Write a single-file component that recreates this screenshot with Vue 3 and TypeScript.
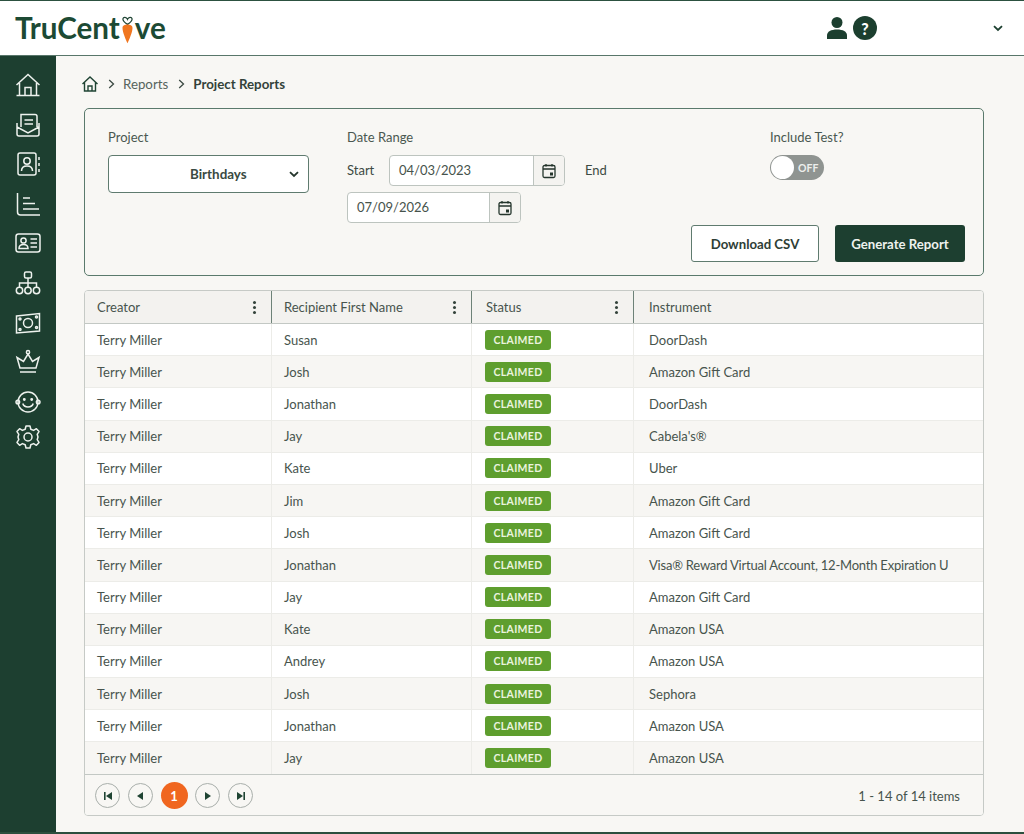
<script setup lang="ts">
interface ReportRow {
  first: string
  instrument: string
}

const rows: ReportRow[] = [
  { first: 'Susan', instrument: 'DoorDash' },
  { first: 'Josh', instrument: 'Amazon Gift Card' },
  { first: 'Jonathan', instrument: 'DoorDash' },
  { first: 'Jay', instrument: "Cabela's®" },
  { first: 'Kate', instrument: 'Uber' },
  { first: 'Jim', instrument: 'Amazon Gift Card' },
  { first: 'Josh', instrument: 'Amazon Gift Card' },
  { first: 'Jonathan', instrument: 'Visa® Reward Virtual Account, 12-Month Expiration U' },
  { first: 'Jay', instrument: 'Amazon Gift Card' },
  { first: 'Kate', instrument: 'Amazon USA' },
  { first: 'Andrey', instrument: 'Amazon USA' },
  { first: 'Josh', instrument: 'Sephora' },
  { first: 'Jonathan', instrument: 'Amazon USA' },
  { first: 'Jay', instrument: 'Amazon USA' },
]
</script>

<template>
  <div class="page">
    <header class="topbar">
      <div class="logo">
        <span>TruCent</span>
        <span class="carrot">
          <svg width="18" height="34" viewBox="0 0 18 34">
            <path d="M9 10.5 C6 8 3.2 6.5 3.5 3.6 C4 1 7.8 1 9 4.2 C10.2 1 14 1 14.5 3.6 C14.8 6.5 12 8 9 10.5 Z" fill="none" stroke="#1f4433" stroke-width="1.5" />
            <path d="M3 14.5 C3 11.5 6 10.5 9 10.5 C12 10.5 15 11.5 15 14.5 C15 20 11 28 9 33 C7 28 3 20 3 14.5 Z" fill="#f0761f" />
          </svg>
        </span>
        <span>ve</span>
      </div>
      <div class="top-icons">
        <svg width="22" height="24" viewBox="0 0 22 24" fill="#1c3f2f">
          <circle cx="11" cy="6.5" r="5.5" />
          <path d="M1 23 V19.5 C1 15.5 5 13.5 11 13.5 C17 13.5 21 15.5 21 19.5 V23 Z" />
        </svg>
        <span class="help">?</span>
      </div>
      <svg class="top-chevron" width="10" height="7" viewBox="0 0 10 7" fill="none" stroke="#1c3f2f" stroke-width="1.8">
        <path d="M1 1.2 L5 5 L9 1.2" />
      </svg>
    </header>

    <div class="body">
      <nav class="sidebar">
        <svg viewBox="0 0 26 26"><path d="M1.5 13 L13 2.5 L24.5 13 M4.5 11 V23.5 H21.5 V11 M10 23.5 V15.5 H16 V23.5 M1.5 23.5 H4.5 M21.5 23.5 H24.5" /></svg>
        <svg viewBox="0 0 26 26"><path d="M6 15 V2.5 H20 Q22 2.5 22 4.5 V15 M2 11 V22 Q2 24 4 24 H22 Q24 24 24 22 V11 M2 15 L13 21 L24 15 M9.5 8 H18 M9.5 12 H18" /></svg>
        <svg viewBox="0 0 26 26"><rect x="3" y="2" width="18" height="22" rx="2" /><circle cx="12" cy="10" r="3.2" /><path d="M6.5 20 C6.5 16 9 15 12 15 C15 15 17.5 16 17.5 20 M24 6 V9 M24 12 V15 M24 18 V21" /></svg>
        <svg viewBox="0 0 26 26"><path d="M2.5 2 V21 Q2.5 24 5.5 24 H25 M8 7 H15 M8 12.5 H20 M8 18 H24" /></svg>
        <svg viewBox="0 0 26 26"><rect x="1" y="4" width="24" height="18" rx="2.5" /><circle cx="8.5" cy="10.5" r="2.6" /><path d="M4 18.5 C4 15.5 6 14.5 8.5 14.5 C11 14.5 13 15.5 13 18.5 Z M15.5 9 H22 M15.5 13 H22 M15.5 17 H22" /></svg>
        <svg viewBox="0 0 26 26"><rect x="9.5" y="2" width="7" height="6" rx="1.5" /><circle cx="4.5" cy="20.5" r="3.2" /><circle cx="13" cy="20.5" r="3.2" /><circle cx="21.5" cy="20.5" r="3.2" /><path d="M13 8 V17.3 M4.5 17.3 V13 H21.5 V17.3" /></svg>
        <svg viewBox="0 0 26 26"><path d="M1.5 6 L24.5 3.5 V21 L1.5 23 Z" /><circle cx="13" cy="13" r="4.5" /><circle cx="5" cy="9" r="1" /><circle cx="21.5" cy="7" r="1" /><circle cx="5" cy="19.5" r="1" /><circle cx="21.5" cy="17.5" r="1" /></svg>
        <svg viewBox="0 0 26 26"><path d="M5 19 L2 8.5 L8.5 12.5 L13 5 L17.5 12.5 L24 8.5 L21 19 Z M5 23 H21" /><circle cx="13" cy="3.2" r="1.6" /></svg>
        <svg viewBox="0 0 26 26"><circle cx="13" cy="13" r="10" /><circle cx="2.8" cy="13" r="1.8" /><circle cx="23.2" cy="13" r="1.8" /><circle cx="9.3" cy="10.5" r=".7" /><circle cx="16.7" cy="10.5" r=".7" /><path d="M7.8 14.5 C9 19 17 19 18.2 14.5" /></svg>
        <svg class="gear" viewBox="0 0 26 26"><circle cx="13" cy="13" r="4" /><path d="M11 2 H15 L15.8 5.2 L18.6 6.4 L21.4 4.7 L24 7.6 L22.2 10.3 L23 13 L22.2 15.7 L24 18.4 L21.4 21.3 L18.6 19.6 L15.8 20.8 L15 24 H11 L10.2 20.8 L7.4 19.6 L4.6 21.3 L2 18.4 L3.8 15.7 L3 13 L3.8 10.3 L2 7.6 L4.6 4.7 L7.4 6.4 L10.2 5.2 Z" stroke-linejoin="round" /></svg>
      </nav>

      <main class="content">
        <div class="crumbs">
          <svg class="home" width="18" height="18" viewBox="0 0 18 18" fill="none" stroke="#1f4433" stroke-width="1.4">
            <path d="M1.5 9 L9 2 L16.5 9 M3.5 7.5 V16 H14.5 V7.5 M7 16 V11 H11 V16" />
          </svg>
          <svg class="sep" width="7" height="10" viewBox="0 0 7 10" fill="none" stroke="#3c4a43" stroke-width="1.3"><path d="M1.2 1 L5.5 5 L1.2 9" /></svg>
          <span class="crumb-link">Reports</span>
          <svg class="sep" width="7" height="10" viewBox="0 0 7 10" fill="none" stroke="#3c4a43" stroke-width="1.3"><path d="M1.2 1 L5.5 5 L1.2 9" /></svg>
          <b>Project Reports</b>
        </div>

        <section class="filters">
          <div class="f-project">
            <label>Project</label>
            <div class="select">
              <span>Birthdays</span>
              <svg width="10" height="7" viewBox="0 0 10 7" fill="none" stroke="#24352c" stroke-width="1.8"><path d="M1 1.2 L5 5 L9 1.2" /></svg>
            </div>
          </div>

          <div class="f-dates">
            <label>Date Range</label>
            <div class="date-line">
              <span class="inline-label">Start</span>
              <div class="date wide">
                <span class="date-value">04/03/2023</span>
                <span class="date-btn">
                  <svg width="16" height="16" viewBox="0 0 16 16" fill="none" stroke="#24352c" stroke-width="1.3"><rect x="2" y="2.5" width="12" height="12" rx="1.5" /><path d="M2 6 H14 M5 1 V3.5 M11 1 V3.5" /><rect x="9" y="9.5" width="3" height="3" fill="#24352c" stroke="none" /></svg>
                </span>
              </div>
              <span class="inline-label end">End</span>
            </div>
            <div class="date narrow">
              <span class="date-value">07/09/2026</span>
              <span class="date-btn">
                <svg width="16" height="16" viewBox="0 0 16 16" fill="none" stroke="#24352c" stroke-width="1.3"><rect x="2" y="2.5" width="12" height="12" rx="1.5" /><path d="M2 6 H14 M5 1 V3.5 M11 1 V3.5" /><rect x="9" y="9.5" width="3" height="3" fill="#24352c" stroke="none" /></svg>
              </span>
            </div>
          </div>

          <div class="f-right">
            <div class="f-test">
              <label>Include Test?</label>
              <div class="toggle"><span class="knob"></span><span class="off">OFF</span></div>
            </div>
            <div class="actions">
              <button type="button" class="btn">Download CSV</button>
              <button type="button" class="btn primary">Generate Report</button>
            </div>
          </div>
        </section>

        <section class="grid">
          <div class="row head">
            <div class="cell">Creator<span class="dots"></span></div>
            <div class="cell">Recipient First Name<span class="dots"></span></div>
            <div class="cell">Status<span class="dots"></span></div>
            <div class="cell">Instrument</div>
          </div>
          <div v-for="(r, i) in rows" :key="i" class="row" :class="{ alt: i % 2 === 1 }">
            <div class="cell">Terry Miller</div>
            <div class="cell">{{ r.first }}</div>
            <div class="cell"><span class="badge">CLAIMED</span></div>
            <div class="cell" :class="{ long: r.instrument.length > 40 }">{{ r.instrument }}</div>
          </div>
          <div class="pager">
            <div class="pages">
              <span class="pg"><svg width="10" height="10" viewBox="0 0 10 10" fill="#1f4433"><path d="M1 1 H2.6 V9 H1 Z M9 1 V9 L3 5 Z" /></svg></span>
              <span class="pg"><svg width="10" height="10" viewBox="0 0 10 10" fill="#1f4433"><path d="M8 1 V9 L2 5 Z" /></svg></span>
              <span class="pg current">1</span>
              <span class="pg"><svg width="10" height="10" viewBox="0 0 10 10" fill="#1f4433"><path d="M2 1 V9 L8 5 Z" /></svg></span>
              <span class="pg"><svg width="10" height="10" viewBox="0 0 10 10" fill="#1f4433"><path d="M1 1 V9 L7 5 Z M7.4 1 H9 V9 H7.4 Z" /></svg></span>
            </div>
            <span class="count">1 - 14 of 14 items</span>
          </div>
        </section>
      </main>
    </div>
  </div>
</template>

<style scoped>
.page {
  width: 1024px;
  height: 834px;
  box-sizing: border-box;
  display: flex;
  flex-direction: column;
  overflow: hidden;
  background: #f8f7f4;
  border-top: 1px solid #2c5140;
  border-bottom: 2px solid #2c4f3e;
  font-family: Lato, "Open Sans", sans-serif;
  color: #3c4a43;
  font-size: 13px;
}

.topbar {
  height: 55px;
  flex: none;
  box-sizing: border-box;
  display: flex;
  align-items: center;
  padding: 0 21px 0 15px;
  background: #fff;
  border-bottom: 1.5px solid #58766a;
}

.logo {
  display: flex;
  align-items: flex-end;
  height: 30px;
  font-size: 29.6px;
  line-height: 30px;
  font-weight: 700;
  color: #1c4a34;
}

.carrot {
  width: 15px;
  display: flex;
  justify-content: center;
  margin-top: -14px;
  height: 44px;
  align-items: flex-end;
  position: relative;
  top: 4px;
}

.top-icons {
  margin-left: auto;
  display: flex;
  align-items: center;
  gap: 5px;
  margin-right: 116px;
}

.help {
  width: 24px;
  height: 24px;
  border-radius: 50%;
  background: #1c3f2f;
  color: #fff;
  font-weight: 900;
  font-size: 16px;
  display: flex;
  align-items: center;
  justify-content: center;
}

.body {
  flex: 1;
  display: flex;
  min-height: 0;
}

.sidebar {
  width: 56px;
  flex: none;
  box-sizing: border-box;
  background: #1d3f30;
  display: flex;
  flex-direction: column;
  align-items: center;
  padding-top: 16px;
  gap: 13.6px;
}

.sidebar svg {
  width: 26px;
  height: 26px;
  flex: none;
  fill: none;
  stroke: #eef2ee;
  stroke-width: 1.5;
}

.sidebar .gear {
  margin-top: -4px;
}

.content {
  flex: 1;
  min-width: 0;
  box-sizing: border-box;
  padding: 0 40px 0 28px;
}

.crumbs {
  height: 52px;
  box-sizing: border-box;
  padding-top: 3px;
  display: flex;
  align-items: center;
  font-size: 13.3px;
  color: #56645d;
}

.crumbs .home {
  margin-right: 9px;
  margin-left: -3px;
}

.crumbs .sep {
  margin-right: 8px;
}

.crumb-link {
  margin-right: 10px;
}

.crumbs b {
  color: #33423a;
  font-weight: 700;
}

.filters {
  height: 168px;
  box-sizing: border-box;
  border: 1.5px solid #5a7a6c;
  border-radius: 5px;
  padding: 20px 18px 13px 23px;
  display: flex;
}

label {
  display: block;
  font-size: 13px;
  line-height: 16px;
  color: #4a5750;
}

.f-project {
  width: 239px;
  flex: none;
}

.select {
  margin-top: 10px;
  width: 201px;
  height: 38px;
  box-sizing: border-box;
  border: 1.5px solid #5f7b6f;
  border-radius: 4px;
  background: #fff;
  display: flex;
  align-items: center;
  justify-content: space-between;
  padding-left: 81px;
  padding-right: 9px;
  font-size: 13.4px;
  font-weight: 700;
  color: #3a4a42;
}

.f-dates {
  width: 300px;
  flex: none;
}

.date-line {
  display: flex;
  align-items: center;
  margin-top: 10px;
}

.inline-label {
  width: 42px;
  flex: none;
  padding-bottom: 2px;
}

.inline-label.end {
  margin-left: 20px;
}

.date {
  height: 31px;
  box-sizing: border-box;
  display: flex;
  border: 1px solid #bdc4bf;
  border-radius: 4px;
  background: #fff;
  overflow: hidden;
}

.date.wide {
  width: 176px;
  flex: none;
}

.date.narrow {
  width: 174px;
  margin-top: 6px;
}

.date-value {
  flex: 1;
  padding-left: 9px;
  line-height: 29px;
  color: #46534c;
}

.date-btn {
  width: 30px;
  background: #f4f3f0;
  border-left: 1px solid #bdc4bf;
  display: flex;
  align-items: center;
  justify-content: center;
}

.f-right {
  flex: 1;
  display: flex;
  flex-direction: column;
  justify-content: space-between;
}

.f-test {
  margin-left: 123px;
}

.toggle {
  margin-top: 10px;
  width: 54px;
  height: 25px;
  box-sizing: border-box;
  border-radius: 13px;
  background: #8f9491;
  display: flex;
  align-items: center;
  gap: 4px;
}

.knob {
  width: 23px;
  height: 23px;
  margin-left: 1px;
  border-radius: 50%;
  background: #fff;
}

.off {
  color: #eceeec;
  font-size: 10.5px;
  font-weight: 700;
}

.actions {
  display: flex;
  justify-content: flex-end;
  gap: 16px;
}

.btn {
  height: 37px;
  width: 128px;
  box-sizing: border-box;
  border: 1.5px solid #5f7b6f;
  border-radius: 3px;
  background: #fff;
  color: #2e3e36;
  font: 700 13.2px Lato, "Open Sans", sans-serif;
}

.btn.primary {
  width: 130px;
  border: 0;
  background: #1d3f30;
  color: #eef2ee;
}

.grid {
  margin-top: 14px;
  height: 526px;
  box-sizing: border-box;
  border: 1px solid #c6cac6;
  border-radius: 4px;
  overflow: hidden;
  background: #fff;
}

.row {
  display: grid;
  grid-template-columns: 187px 200px 162px 1fr;
  height: 32.2px;
  box-sizing: border-box;
  border-bottom: 1px solid #ecece8;
}

.row.alt {
  background: #f7f6f3;
}

.cell {
  display: flex;
  align-items: center;
  padding-left: 12px;
  border-right: 1px solid #ecece8;
  color: #47544d;
  white-space: nowrap;
  overflow: hidden;
}

.cell:nth-child(3) {
  padding-left: 14px;
}

.cell:last-child {
  border-right: 0;
  padding-left: 15px;
}

.cell.long {
  letter-spacing: -0.22px;
}

.row.head {
  height: 33px;
  background: #f3f2ef;
  border-bottom: 1px solid #c3c8c4;
}

.row.head .cell {
  border-right: 1px solid #6d8278;
  justify-content: space-between;
  padding-right: 15px;
}

.row.head .cell:last-child {
  border-right: 0;
  justify-content: flex-start;
}

.dots {
  width: 3px;
  height: 3px;
  border-radius: 50%;
  background: #33423a;
  box-shadow: 0 -5px 0 #33423a, 0 5px 0 #33423a;
}

.badge {
  width: 66px;
  height: 20px;
  margin-left: -1px;
  border-radius: 3px;
  background: #5e9e2e;
  color: #eaf3de;
  font-size: 10.5px;
  font-weight: 700;
  letter-spacing: 0.3px;
  display: flex;
  align-items: center;
  justify-content: center;
}

.pager {
  height: 42px;
  display: flex;
  align-items: center;
  justify-content: space-between;
  padding: 0 23px 0 10px;
  background: #f8f7f4;
  border-top: 1px solid #c3c8c4;
  margin-top: -1px;
}

.pages {
  display: flex;
  align-items: center;
  gap: 7.8px;
}

.pg {
  width: 25px;
  height: 25px;
  box-sizing: border-box;
  border: 1px solid #a9afab;
  border-radius: 50%;
  display: flex;
  align-items: center;
  justify-content: center;
}

.pg.current {
  width: 27px;
  height: 27px;
  border: 0;
  background: #f0661f;
  color: #fff;
  font-weight: 700;
}

.count {
  color: #47544d;
}
</style>

<style>
html,
body {
  margin: 0;
  background: #fff;
}
</style>
